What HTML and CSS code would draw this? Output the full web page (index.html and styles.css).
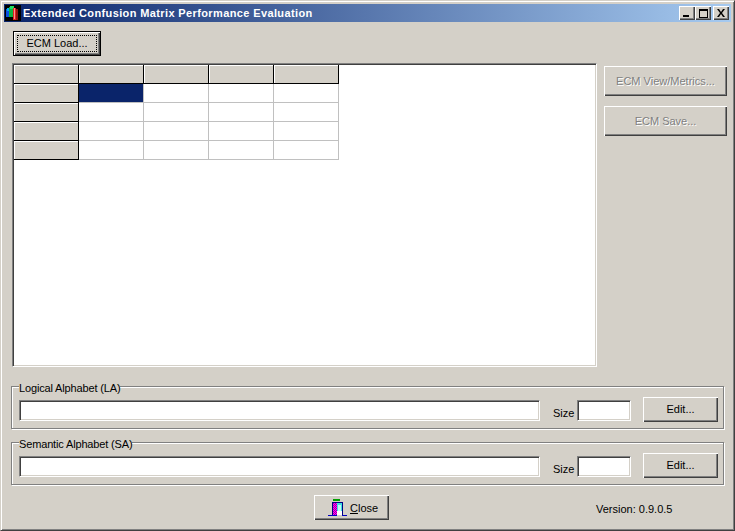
FILE: index.html
```html
<!DOCTYPE html>
<html>
<head>
<meta charset="utf-8">
<title>Extended Confusion Matrix Performance Evaluation</title>
<link rel="stylesheet" href="styles.css">
</head>
<body>
<div class="window">
  <header class="titlebar">
    <svg class="app-icon" width="16" height="16" viewBox="0 0 16 16">
      <rect width="16" height="16" fill="#000"/>
      <rect x="1" y="4" width="4" height="8" fill="#0a50e0"/>
      <rect x="2" y="3" width="3" height="3" fill="#00b0f0"/>
      <rect x="4" y="2" width="4" height="10" fill="#10b040"/>
      <rect x="5" y="1" width="4" height="3" fill="#20e060"/>
      <rect x="8" y="3" width="3" height="12" fill="#e02020"/>
      <rect x="11" y="4" width="2" height="11" fill="#901010"/>
      <rect x="9" y="3" width="1" height="11" fill="#ff9090"/>
    </svg>
    <span class="title-text">Extended Confusion Matrix Performance Evaluation</span>
    <div class="caption-buttons">
      <span class="caption-btn"><svg width="8" height="7" viewBox="0 0 8 7"><rect x="0" y="5" width="6" height="2" fill="#000"/></svg></span>
      <span class="caption-btn"><svg width="9" height="9" viewBox="0 0 9 9"><path d="M0 0H9V9H0ZM1 2V8H8V2Z" fill="#000" fill-rule="evenodd"/></svg></span>
      <span class="caption-btn caption-close"><svg width="8" height="8" viewBox="0 0 8 8"><path d="M0 0H2L4 3 6 0H8L5 4 8 8H6L4 5 2 8H0L3 4Z" fill="#000"/></svg></span>
    </div>
  </header>

  <main class="content">
    <button class="btn btn-default"><span class="focus-ring">ECM Load...</span></button>

    <div class="main-row">
      <div class="grid-box">
        <div class="grid">
          <div class="cell head"></div><div class="cell head"></div><div class="cell head"></div><div class="cell head"></div><div class="cell head"></div>
          <div class="cell head"></div><div class="cell selected"></div><div class="cell"></div><div class="cell"></div><div class="cell"></div>
          <div class="cell head"></div><div class="cell"></div><div class="cell"></div><div class="cell"></div><div class="cell"></div>
          <div class="cell head"></div><div class="cell"></div><div class="cell"></div><div class="cell"></div><div class="cell"></div>
          <div class="cell head"></div><div class="cell"></div><div class="cell"></div><div class="cell"></div><div class="cell"></div>
        </div>
      </div>
      <div class="side">
        <button class="btn btn-side" disabled>ECM View/Metrics...</button>
        <button class="btn btn-side" disabled>ECM Save...</button>
      </div>
    </div>

    <section class="group group-first">
      <span class="group-label">Logical Alphabet (LA)</span>
      <input class="field field-wide" type="text">
      <span class="size-label">Size</span>
      <input class="field field-size" type="text">
      <button class="btn btn-edit">Edit...</button>
    </section>

    <section class="group group-second">
      <span class="group-label">Semantic Alphabet (SA)</span>
      <input class="field field-wide" type="text">
      <span class="size-label">Size</span>
      <input class="field field-size" type="text">
      <button class="btn btn-edit">Edit...</button>
    </section>

    <footer class="footer">
      <button class="btn btn-close">
        <svg width="19" height="20" viewBox="0 0 19 20">
          <defs>
            <pattern id="dither" width="2" height="2" patternUnits="userSpaceOnUse">
              <rect width="2" height="2" fill="#ff00ff"/>
              <rect width="1" height="1" fill="#a000a0"/>
              <rect x="1" y="1" width="1" height="1" fill="#a000a0"/>
            </pattern>
          </defs>
          <rect x="5" y="1" width="7" height="2" fill="#00a000"/>
          <rect x="4" y="4" width="11" height="13" fill="#000080"/>
          <rect x="5" y="5" width="4" height="12" fill="url(#dither)"/>
          <rect x="9" y="5" width="5" height="12" fill="#40e0e0"/>
          <rect x="10" y="7" width="3" height="6" fill="#c0f8f8"/>
          <rect x="9" y="13" width="5" height="4" fill="#fff"/>
          <rect x="0" y="17" width="9" height="1" fill="#0000c0"/>
          <rect x="14" y="17" width="5" height="1" fill="#0000c0"/>
        </svg>
        <span><u>C</u>lose</span>
      </button>
      <span class="version">Version: 0.9.0.5</span>
    </footer>
  </main>
</div>
</body>
</html>
```

FILE: styles.css
```css
* { box-sizing: border-box; }

html, body {
  margin: 0;
  padding: 0;
}

body {
  font-family: "Liberation Sans", Arial, sans-serif;
  font-size: 11px;
  color: #000;
  background: #d4d0c8;
}

.window {
  width: 735px;
  height: 531px;
  background: #d4d0c8;
  border-style: solid;
  border-width: 1px;
  border-color: #d4d0c8 #404040 #404040 #d4d0c8;
  box-shadow: inset 1px 1px 0 #fff, inset -1px -1px 0 #808080;
  padding: 3px;
  overflow: hidden;
}

/* Title bar */
.titlebar {
  height: 18px;
  display: flex;
  align-items: center;
  padding: 0 2px 0 1px;
  background: linear-gradient(to right, #0a246a, #a6caf0);
}

.app-icon { flex: none; }

.title-text {
  margin-left: 2px;
  color: #fff;
  font-weight: bold;
  font-size: 11px;
  letter-spacing: 0.38px;
  white-space: nowrap;
}

.caption-buttons {
  margin-left: auto;
  display: flex;
}

.caption-btn {
  width: 16px;
  height: 14px;
  display: flex;
  align-items: center;
  justify-content: center;
  background: #d4d0c8;
  box-shadow: inset 1px 1px 0 #fff, inset -1px -1px 0 #404040, inset -2px -2px 0 #808080;
}

.caption-close { margin-left: 2px; }

/* Content */
.content {
  padding: 9px 0 0 9px;
}

.btn {
  display: flex;
  align-items: center;
  justify-content: center;
  margin: 0;
  padding: 0 0 1px;
  border: 0;
  font: inherit;
  color: #000;
  background: #d4d0c8;
  box-shadow: inset 1px 1px 0 #fff, inset -1px -1px 0 #404040, inset -2px -2px 0 #808080;
}

.btn:disabled {
  color: #808080;
  text-shadow: 1px 1px 0 #fff;
}

.btn-default {
  width: 88px;
  height: 25px;
  padding: 4px;
  box-shadow: inset 0 0 0 1px #000, inset 2px 2px 0 #fff, inset -2px -2px 0 #404040, inset -3px -3px 0 #808080;
}

.focus-ring {
  width: 100%;
  height: 100%;
  display: flex;
  align-items: center;
  justify-content: center;
  padding-bottom: 1px;
  border: 1px dotted #000;
}

.main-row {
  display: flex;
  margin: 7px 0 0 -1px;
}

.grid-box {
  width: 585px;
  height: 304px;
  flex: none;
  background: #fff;
  border-style: solid;
  border-width: 1px;
  border-color: #808080 #fff #fff #808080;
  box-shadow: inset 1px 1px 0 #404040, inset -1px -1px 0 #d4d0c8;
  padding: 1px;
}

.grid {
  display: grid;
  grid-template-columns: repeat(5, 65px);
  grid-auto-rows: 19px;
}

.cell {
  background: #fff;
  border-right: 1px solid #c0c0c0;
  border-bottom: 1px solid #c0c0c0;
}

.cell.head {
  background: #d4d0c8;
  border-right-color: #000;
  border-bottom-color: #000;
  box-shadow: inset 1px 1px 0 #fff;
}

.cell.selected {
  background: #0a246a;
}

.side {
  margin: 3px 0 0 7px;
  display: flex;
  flex-direction: column;
  gap: 10px;
}

.btn-side {
  width: 123px;
  height: 30px;
}

/* Group boxes */
.group {
  position: relative;
  width: 713px;
  height: 43px;
  margin-left: -2px;
  padding: 13px 0 0 7px;
  display: flex;
  align-items: flex-start;
  border: 1px solid #808080;
  box-shadow: inset 1px 1px 0 #fff, 1px 1px 0 #fff;
}

.group-first { margin-top: 19px; }
.group-second { margin-top: 13px; }

.group-label {
  position: absolute;
  left: 7px;
  top: -5px;
  line-height: 13px;
  letter-spacing: -0.15px;
  background: #d4d0c8;
}

.field {
  height: 21px;
  margin: 0;
  padding: 0;
  background: #fff;
  border-style: solid;
  border-width: 1px;
  border-color: #808080 #fff #fff #808080;
  box-shadow: inset 1px 1px 0 #404040, inset -1px -1px 0 #d4d0c8;
  outline: none;
}

.field-wide { width: 521px; }

.size-label {
  width: 24px;
  margin-left: 13px;
  margin-top: 6px;
  line-height: 14px;
}

.field-size {
  width: 54px;
}

.btn-edit {
  width: 75px;
  height: 25px;
  margin: -3px 0 0 12px;
}

/* Footer */
.footer {
  display: flex;
  align-items: flex-start;
  margin-top: 10px;
  margin-left: 301px;
}

.btn-close {
  width: 75px;
  height: 25px;
  gap: 3px;
  padding: 0 0 0 14px;
  justify-content: flex-start;
}

.version {
  margin: 7px 0 0 207px;
  line-height: 14px;
}
```
